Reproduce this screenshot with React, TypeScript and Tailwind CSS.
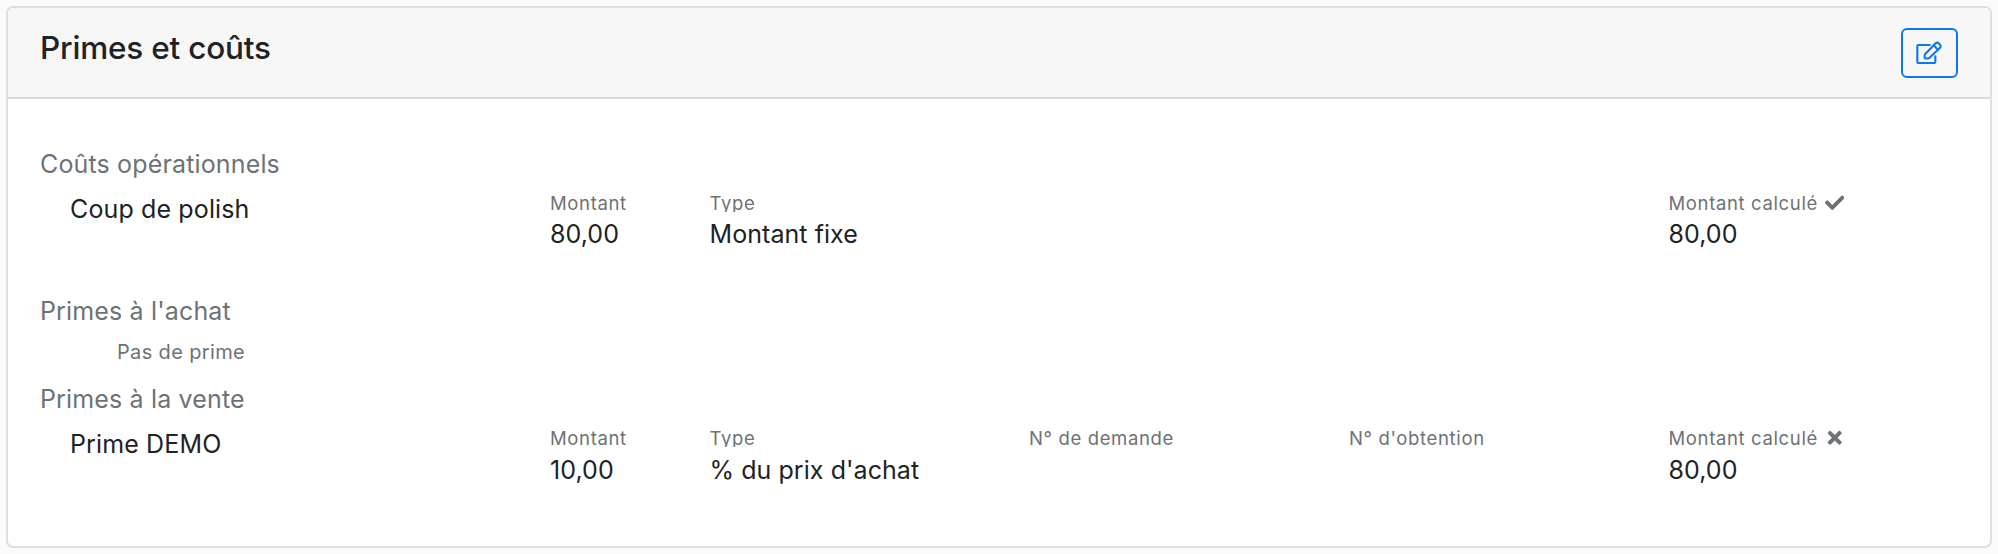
import { FaCheck, FaTimes } from "react-icons/fa";
import type { ReactNode } from "react";

function EditIcon() {
  return (
    <svg
      width="26"
      height="23"
      viewBox="60 56 78 69"
      fill="none"
      stroke="currentColor"
      strokeWidth="6.3"
      strokeLinecap="round"
      strokeLinejoin="round"
    >
      <path d="M101 68H67a3 3 0 0 0-3 3v48a3 3 0 0 0 3 3h48a3 3 0 0 0 3-3v-17" />
      <path d="M87 96l32-33a6 6 0 0 1 9 0l4 4a6 6 0 0 1 0 9l-32 31q-2 1-5 1.500h-6q-3 0-3-3v-5q0-3 1-4.500z" />
      <path d="M113 69l13 13" />
    </svg>
  );
}

function Field({
  label,
  value,
  icon,
  valueClass = "mt-1",
}: {
  label: string;
  value?: string;
  icon?: ReactNode;
  valueClass?: string;
}) {
  return (
    <div className="pt-2">
      <div className="flex h-[22px] items-start gap-[7px] overflow-hidden text-[18.5px] leading-[27px] tracking-[0.64px] whitespace-nowrap text-[#6d7276]">
        {label}
        {icon}
      </div>
      <div className={`${valueClass} text-[25px] leading-[36px] tracking-[0.06px] whitespace-nowrap`}>{value}</div>
    </div>
  );
}

function Heading({ children }: { children: ReactNode }) {
  return <h3 className="text-[25px] leading-[36px] tracking-[0.15px] text-[#6d7276]">{children}</h3>;
}

function Row({ name, children }: { name: string; children: ReactNode }) {
  return (
    <div className="grid h-[111px] grid-cols-[480px_159.5px_319.5px_320px_319.5px_1fr] pl-[30px]">
      <div className="pt-[9px] text-[25px] leading-[36px] tracking-[0.13px]">{name}</div>
      {children}
    </div>
  );
}

export default function App() {
  return (
    <div className="h-[554px] bg-[#fbfbfb] px-[6px] pt-[6px] font-['Inter',sans-serif] text-[#212224]">
      <section className="h-[542px] overflow-hidden rounded-[7px] border-2 border-[#dfdfdf] bg-white">
        <header className="flex h-[91px] items-start justify-between border-b-2 border-[#d9d9d9] bg-[#f7f7f7] pt-[20px] pr-[32px] pl-[32px]">
          <h2 className="text-[31.5px] leading-[40px] font-medium tracking-[-0.2px]">Primes et coûts</h2>
          <button
            aria-label="Modifier"
            className="flex h-[50px] w-[57px] items-center justify-center rounded-[6px] border-2 border-[#0b79ea] pr-px pb-0.5 text-[#0b79ea]"
          >
            <EditIcon />
          </button>
        </header>
        <div className="px-[32px] pt-[47px]">
          <Heading>Coûts opérationnels</Heading>
          <Row name="Coup de polish">
            <Field label="Montant" value="80,00" />
            <Field label="Type" value="Montant fixe" />
            <div />
            <div />
            <Field label="Montant calculé" value="80,00" icon={<FaCheck size={19.5} className="mt-[3px]" />} />
          </Row>
          <Heading>Primes à l'achat</Heading>
          <p className="h-[52px] pt-[8px] pl-[77px] text-[20px] leading-[30px] tracking-[0.35px] text-[#6d7276]">
            Pas de prime
          </p>
          <Heading>Primes à la vente</Heading>
          <Row name="Prime DEMO">
            <Field label="Montant" value="10,00" valueClass="mt-[5px]" />
            <Field label="Type" value="% du prix d'achat" valueClass="mt-[5px]" />
            <Field label="N° de demande" />
            <Field label="N° d'obtention" />
            <Field
              label="Montant calculé"
              value="80,00"
              valueClass="mt-[5px]"
              icon={<FaTimes size={19.5} stroke="currentColor" strokeWidth={14} className="mt-[3px]" />}
            />
          </Row>
        </div>
      </section>
    </div>
  );
}
